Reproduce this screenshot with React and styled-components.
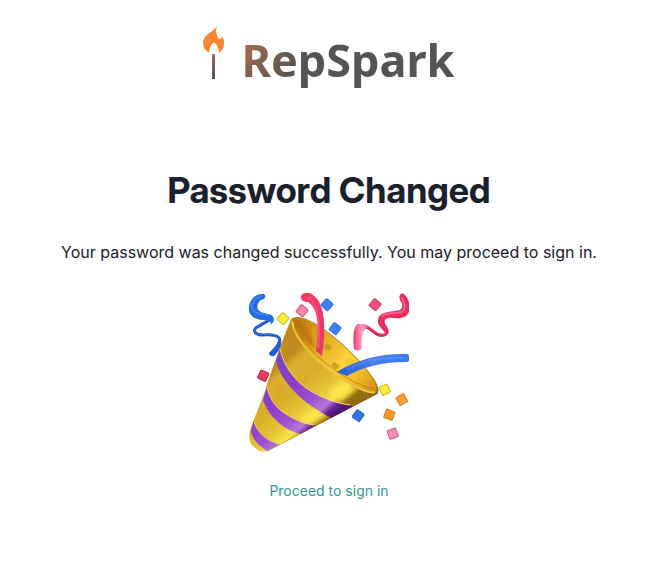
import React from 'react'
import styled, { createGlobalStyle } from 'styled-components'

const GlobalStyle = createGlobalStyle`
    body {
        margin:0;
        background:#ffffff;
        color:#1a202c;
        font-family:Inter, "Liberation Sans", sans-serif;
    }
`;

const Page = styled.main`
    display:flex;
    flex-direction:column;
    align-items:center;
    padding:26px 0 48px 3px;
    text-align:center;
`;

const Logo = styled.div`
    display:flex;
    align-items:flex-start;
    gap:16px;
    height:64px;
`;

const Match = styled.svg`
    width:22px;
    height:53px;
`;

const LogoText = styled.span`
    font-family:"Noto Sans", "Open Sans", sans-serif;
    font-size:45px;
    font-weight:700;
    line-height:68px;
    color:transparent;
    background:radial-gradient(circle at 0 20px, #a9714f 0, #85634f 24px, #545454 60px);
    background-clip:text;
    -webkit-background-clip:text;
`;

const Title = styled.h1`
    margin:79px 0 29px;
    font-family:"Inter Display", Inter, sans-serif;
    font-size:36px;
    font-weight:700;
    line-height:42px;
`;

const Message = styled.p`
    margin:0 0 28px;
    font-size:16px;
    line-height:24px;
`;

const Popper = styled.svg`
    width:160px;
    height:160px;
`;

const SignInLink = styled.a`
    margin-top:28px;
    font-size:14px;
    line-height:22px;
    color:#319795;
    text-decoration:none;
    &:hover{
        text-decoration:underline;
    }
`;

const confetti = [
    { x: 34, y: 26, turn: 42, fill: '#f8ed38', edge: '#c9b92c' },
    { x: 53, y: 18, turn: 38, fill: '#f984ad', edge: '#c8547f' },
    { x: 78, y: 12, turn: 42, fill: '#3b82f6', edge: '#2f70dc' },
    { x: 86, y: 36, turn: 38, fill: '#3b82f6', edge: '#2f70dc' },
    { x: 126, y: 12, turn: 40, fill: '#f44d7c', edge: '#cf4068' },
    { x: 14, y: 83, turn: 25, fill: '#e5395f', edge: '#b92e4f' },
    { x: 136, y: 97, turn: 65, fill: '#f8ed38', edge: '#c8b82f' },
    { x: 153, y: 107, turn: 60, fill: '#fca03a', edge: '#cf8236' },
    { x: 140, y: 122, turn: 20, fill: '#fb9827', edge: '#c87c22' },
    { x: 109, y: 123, turn: 35, fill: '#3078e8', edge: '#2867ca' },
    { x: 144, y: 141, turn: 70, fill: '#fb8dbb', edge: '#d0568a' },
];

const MatchIcon = () => (
    <Match viewBox="0 0 22 53" aria-hidden="true">
        <defs>
            <linearGradient id="stick" x1="0" y1="0" x2="0" y2="1">
                <stop offset="0" stopColor="#a1735d" />
                <stop offset=".5" stopColor="#79645d" />
                <stop offset="1" stopColor="#4f4f53" />
            </linearGradient>
        </defs>
        <path fill="#fc8531" d="M14 0C11 6 0 8 0 17c0 4 2 7 6 10 0-5 2-8 5-11 3 3 5 6 5 11 4-3 5-6 5-11 0-2-1-4-2-6 0 2-1 3-3 3-2-3-4-7-2-13z" />
        <path fill="url(#stick)" d="M9 28h3v25H9z" />
        <path stroke="#4d4b50" strokeDasharray="1 4" d="M11 31v21" />
    </Match>
)

const PartyPopper = () => (
    <Popper viewBox="0 0 160 160" role="img" aria-label="Party popper">
        <defs>
            <linearGradient id="gold" gradientUnits="userSpaceOnUse" x1="24" y1="78" x2="72" y2="133">
                <stop offset="0" stopColor="#c08c1f" />
                <stop offset=".12" stopColor="#dcae2e" />
                <stop offset=".4" stopColor="#d8ae2a" />
                <stop offset=".65" stopColor="#e6c435" />
                <stop offset=".84" stopColor="#fbe34a" />
                <stop offset=".95" stopColor="#c29a22" />
                <stop offset="1" stopColor="#94700f" />
            </linearGradient>
            <linearGradient id="inside" gradientUnits="userSpaceOnUse" x1="43" y1="29" x2="125" y2="98">
                <stop offset="0" stopColor="#b97d12" />
                <stop offset=".15" stopColor="#d28d14" />
                <stop offset=".35" stopColor="#e3ad22" />
                <stop offset=".6" stopColor="#fbcf3a" />
                <stop offset=".8" stopColor="#f3bd2e" />
                <stop offset="1" stopColor="#d58c14" />
            </linearGradient>
            <linearGradient id="purple" gradientUnits="userSpaceOnUse" x1="24" y1="78" x2="72" y2="133">
                <stop offset="0" stopColor="#7c42c0" />
                <stop offset=".35" stopColor="#8c3dc8" />
                <stop offset=".65" stopColor="#9c4fd0" />
                <stop offset=".84" stopColor="#b678dc" />
                <stop offset=".93" stopColor="#6c2396" />
                <stop offset="1" stopColor="#4f1775" />
            </linearGradient>
            <linearGradient id="blue" gradientUnits="userSpaceOnUse" x1="90" y1="82" x2="160" y2="66">
                <stop offset="0" stopColor="#245ed5" />
                <stop offset=".5" stopColor="#4a7fec" />
                <stop offset="1" stopColor="#3b7dee" />
            </linearGradient>
            <linearGradient id="pink" gradientUnits="userSpaceOnUse" x1="52" y1="0" x2="72" y2="65">
                <stop offset="0" stopColor="#fb3565" />
                <stop offset=".5" stopColor="#ef3765" />
                <stop offset="1" stopColor="#e63962" />
            </linearGradient>
            <linearGradient id="tail" x1="0" y1="0" x2="1" y2="0">
                <stop offset="0" stopColor="#ee396c" />
                <stop offset=".55" stopColor="#ffa7c5" />
                <stop offset="1" stopColor="#e04a75" />
            </linearGradient>
            <filter id="soft" x="-20%" y="-20%" width="140%" height="140%">
                <feGaussianBlur stdDeviation="1.5" />
            </filter>
            <clipPath id="coneShape">
                <path d="M42 27C36 42 20 85 16 99L2 135C-1 145 0 151 5 155c5 5 10 6 16 3L128 102c3-3 1-9-3-15C103 58 75 34 52 26q-7-2-10 1z" />
            </clipPath>
        </defs>

        {/* curl behind the cone */}
        <path fill="none" stroke="#1e56c9" strokeWidth="3" strokeLinecap="round" d="M21 27C13 34 3 35 6 40c3 6 17 0 23 5 5 3-2 12-6 17" />
        <path fill="none" stroke="#3479ef" strokeWidth="1" d="M21 26C12 33 4 35 6 40c3 5 17 0 22 4" />
        <path fill="#2769e3" d="M15 2C7 1 1 7 0 15c-1 7 4 12 13 13 6 0 11 2 8 5 6-3 5-10-2-11C9 20 7 17 9 12c1-4 4-4 7-6q1-3-1-4z" />
        <path fill="none" stroke="#4a8af4" strokeWidth="2" strokeOpacity=".8" d="M12 4C5 7 1 13 4 18c3 5 12 3 16 6" />
        <path fill="#235fd6" d="M29 44c7 5 2 15-4 20q-4 1-5-3c7-7 10-11 9-17z" />

        <g clipPath="url(#coneShape)">
            <rect width="160" height="160" fill="url(#gold)" />
            <path fill="#ffe84a" fillOpacity=".7" filter="url(#soft)" d="M78 101l16-10 12 7-14 10zM52 127l16-10 9 6-15 8z" />
            <path fill="#8e6710" fillOpacity=".6" filter="url(#soft)" d="M88 114l22-12 19-2v8L90 126z" />
            <path fill="url(#purple)" d="M31 57c4 18 16 33 29 41 14 8 27 14 44 16L84 127C67 118 54 109 44 98 36 89 29 79 27 69z" />
            <path fill="url(#purple)" d="M18 94c3 15 12 25 24 31 9 5 16 8 25 8l-15 9C37 139 20 126 14 108z" />
            <path fill="url(#purple)" d="M5 128c2 11 13 21 26 24l-13 7C9 153 3 147 2 138z" />
            <g fill="none" stroke="#f3da6b" strokeWidth="1">
                <path d="M31 57c4 18 16 33 29 41 13 8 27 13 41 15" />
                <path d="M18 95c3 15 12 24 24 30 9 5 16 7 23 8" />
                <path d="M5 129c3 12 13 20 25 23" />
            </g>
            <path fill="none" stroke="#ee8b22" strokeOpacity=".5" strokeWidth="3" filter="url(#soft)" d="M33 90l-4 14M20 89l-3 8" />
            <path fill="none" stroke="#5b400c" strokeOpacity=".5" strokeWidth="3" d="M17 161L130 102" />
        </g>

        <path fill="url(#inside)" d="M43 28c8-8 31 8 50 25 22 19 39 40 34 46-3 4-20-3-35-13C68 72 43 48 43 28z" />
        <path fill="#a5660c" fillOpacity=".6" filter="url(#soft)" d="M48 28c9 3 14 13 18 29C54 47 46 36 46 29z" />
        <path fill="#e2781a" fillOpacity=".6" filter="url(#soft)" d="M52 29l5 2 6 12-5-2z" />
        <g fill="#b8861c" fillOpacity=".6">
            <path d="M78 51l5 4-4 4-5-3zM85 70l6 4-4 4-5-4z" />
        </g>
        <path fill="none" stroke="#e9c53c" strokeWidth="2" d="M43 29c2 19 25 42 49 57 15 10 29 16 34 14" />
        <path fill="none" stroke="#a9780f" strokeWidth="1" strokeOpacity=".7" d="M46 29c3 18 25 40 47 54 15 9 27 14 32 13" />
        <path fill="none" stroke="#b07c10" strokeWidth="1" d="M43 28c7-8 29 5 50 24 21 19 37 39 35 46" />

        <path fill="url(#pink)" d="M52 4c2-4 8-4 12-1 13 9 13 36 9 61l-6-5c3-23 3-42-8-49-4 0-8-2-7-6z" />
        <path fill="none" stroke="#ff7096" strokeWidth="2" strokeOpacity=".5" d="M59 5c12 8 12 31 10 51" />
        <path fill="url(#blue)" d="M88 80c19-12 43-19 70-18q2 0 2 2v4q0 2-3 2c-25 0-45 6-59 14z" />
        <path fill="none" stroke="#7ca8ff" strokeWidth="2" strokeOpacity=".3" d="M98 77c18-9 36-12 56-11" />

        <path fill="none" stroke="#d92955" strokeWidth="3" d="M108 34c14-3 17 12 27 9 6-2 2-8-1-11" />
        <path fill="none" stroke="#ff5687" strokeWidth="1" d="M109 33c13-2 17 11 27 9" />
        <path fill="#e72f5e" d="M129 28c1-8 10-8 17-9 8 0 9-5 5-11-2-4 1-8 4-6 7 6 8 20 0 23-7 3-13-1-18 2-5 3 5 11 0 16-1-5-9-8-8-15z" />
        <path fill="none" stroke="#ff6b97" strokeWidth="2" strokeOpacity=".8" strokeLinecap="round" d="M133 24c8-6 18 0 22-6 2-5-1-9-2-12" />
        <path fill="url(#tail)" d="M105 57c-1-14-1-25 6-25 4 0 7 2 9 3-6 2-8 8-7 22q-4 3-8 0z" />

        {confetti.map((piece) => (
            <rect
                key={`${piece.x}-${piece.y}`}
                x={piece.x - 4}
                y={piece.y - 4}
                width="9"
                height="9"
                rx="1"
                fill={piece.fill}
                stroke={piece.edge}
                strokeWidth="1"
                transform={`rotate(${piece.turn} ${piece.x} ${piece.y})`}
            />
        ))}
    </Popper>
)

const App = () => {
  return (
    <>
        <GlobalStyle />
        <Page>
            <Logo>
                <MatchIcon />
                <LogoText>RepSpark</LogoText>
            </Logo>
            <Title>Password Changed</Title>
            <Message>Your password was changed successfully. You may proceed to sign in.</Message>
            <PartyPopper />
            <SignInLink href="#">Proceed to sign in</SignInLink>
        </Page>
    </>
  )
}

export default App
